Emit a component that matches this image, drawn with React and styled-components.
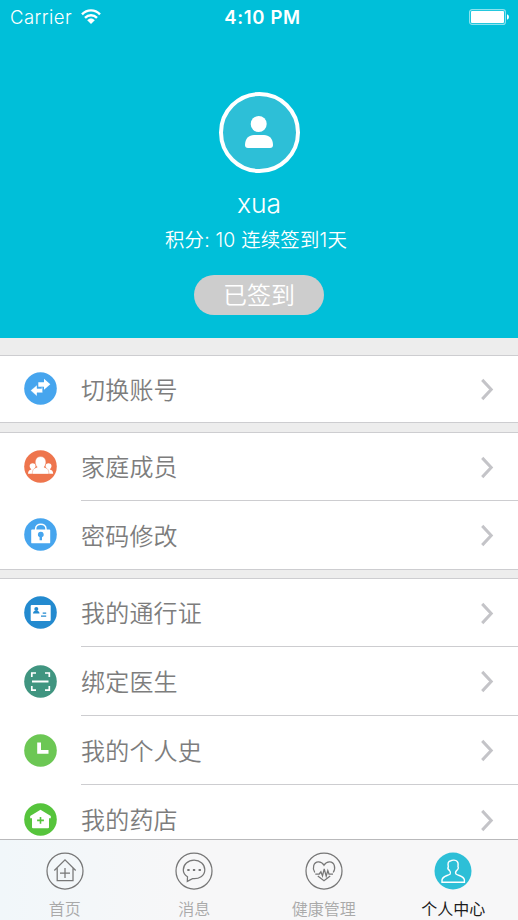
import React from "react";
import styled, { createGlobalStyle } from "styled-components";

const COLORS = {
  primary: "#00bfd9",
  avatar: "#2dbfd7",
  page: "#ededed",
  line: "#cdcdd0",
  text: "#7d7d7d",
  muted: "#a9a9a9",
};

const GlobalStyle = createGlobalStyle`
  * {
    box-sizing: border-box;
  }

  body {
    margin: 0;
    overflow: hidden;
    background: ${COLORS.page};
    font-family: Inter, "Noto Sans CJK SC", sans-serif;
  }
`;

const Screen = styled.div`
  display: flex;
  flex-direction: column;
  width: 518px;
  height: 920px;
  overflow: hidden;
`;

const Hero = styled.header`
  display: flex;
  flex: none;
  flex-direction: column;
  align-items: center;
  height: 338px;
  color: white;
  background: ${COLORS.primary};
`;

const StatusBar = styled.div`
  display: grid;
  grid-template-columns: 1fr auto 1fr;
  align-items: center;
  width: 100%;
  height: 34px;
  padding: 0 9px 0 10px;
`;

const Carrier = styled.div`
  display: flex;
  align-items: center;
  gap: 9px;
  font-size: 18.5px;
  font-weight: 300;
  letter-spacing: 0.45px;
`;

const Time = styled.div`
  padding-left: 6px;
  font-size: 18.5px;
  font-weight: 600;
  letter-spacing: 0.65px;
`;

const BatteryIcon = styled.svg`
  justify-self: end;
`;

const Avatar = styled.div`
  display: grid;
  place-items: center;
  width: 81px;
  height: 81px;
  margin-top: 58px;
  padding-bottom: 1px;
  border: 4px solid white;
  border-radius: 50%;
  background: ${COLORS.avatar};
`;

const Name = styled.div`
  margin-top: 14px;
  font-size: 26.5px;
  font-weight: 350;
  line-height: 32px;
`;

const Points = styled.div`
  margin-top: 7px;
  padding-right: 6px;
  font-size: 19.4px;
  font-weight: 350;
  line-height: 28px;
  letter-spacing: 0.2px;
  white-space: nowrap;
`;

const CheckIn = styled.button`
  width: 130px;
  height: 40px;
  margin-top: 21px;
  padding: 1px 0 0;
  border: 0;
  border-radius: 20px;
  color: white;
  background: #cdcdcd;
  font: 350 24px/39px Inter, "Noto Sans CJK SC", sans-serif;
`;

const Menu = styled.main`
  flex: 1;
  min-height: 0;
  padding-top: 17px;
  overflow: hidden;
`;

const Group = styled.section`
  margin-bottom: ${(props) => props.$gap}px;
  border-top: 1px solid ${COLORS.line};
  border-bottom: 1px solid ${COLORS.line};
  background: white;
`;

const Row = styled.div`
  display: flex;
  align-items: center;
  height: ${(props) => props.$height}px;
  padding-left: 24px;
`;

const RowBody = styled.div`
  display: flex;
  flex: 1;
  align-items: center;
  justify-content: space-between;
  height: 100%;
  margin-left: 24px;
  padding-right: 24px;
  border-bottom: ${(props) => (props.$divided ? `1px solid ${COLORS.line}` : "0")};
`;

const RowLabel = styled.span`
  padding-top: 3px;
  color: ${COLORS.text};
  font-size: 24px;
  font-weight: 350;
  line-height: 36px;
  letter-spacing: 0.2px;
`;

const TabBar = styled.nav`
  display: grid;
  flex: none;
  grid-template-columns: repeat(4, 1fr);
  height: 81px;
  border-top: 1px solid #b9b9bb;
  background: linear-gradient(90deg, #f1f7fa, #f7f7f8 35%);
`;

const Tab = styled.div`
  display: flex;
  flex-direction: column;
  align-items: center;
  padding-top: 12px;
  color: ${(props) => (props.$active ? "#1c1c1c" : COLORS.muted)};
  font-size: 16px;
  font-weight: ${(props) => (props.$active ? 400 : 350)};
  line-height: 24px;
`;

const TabIcon = styled.svg`
  flex: none;
  width: 38px;
  height: 38px;
  margin-bottom: 7px;
  fill: none;
  stroke: #777;
  stroke-width: 1.25;
`;

const BadgeIcon = styled.svg`
  flex: none;
  width: 33px;
  height: 33px;
  margin-bottom: 1px;
  fill: white;
`;

const Badge = ({ color, children }) => (
  <BadgeIcon viewBox="0 0 33 33">
    <circle cx="16.5" cy="16.5" r="16.3" fill={color} />
    {children}
  </BadgeIcon>
);

const SwitchIcon = () => (
  <Badge color="#46a5ee">
    <path d="M14.3 10.2H20V6.8L26.3 12.3L20 17.8V14.8H14.3Z" />
    <path
      d="M18.6 15.2V20.8H13V24.3L6.6 18.4L13 13V16.5H17.5V15.2Z"
      stroke="#46a5ee"
      strokeWidth="0.4"
    />
  </Badge>
);

const FamilyIcon = () => (
  <Badge color="#ee754d">
    <path d="M4 23.8C4.2 20.8 5.2 20 7.4 19.4C4.4 16.7 5.6 13.3 8.7 13.3C11.8 13.3 12.6 16.6 10.4 19.1L12 20.5V23.8Z" />
    <path d="M29.2 23.8C29 20.8 28 20 25.8 19.4C28.8 16.7 27.6 13.3 24.5 13.3C21.4 13.3 20.6 16.6 22.8 19.1L21.2 20.5V23.8Z" />
    <path
      d="M8.3 24.1C8.4 19.5 9.6 18.3 13.2 17.2C9.6 13 11.3 6.6 16.6 6.6C21.9 6.6 23.6 13 20 17.2C23.6 18.3 24.8 19.5 24.9 24.1Z"
      stroke="#ee754d"
      strokeWidth="0.4"
    />
  </Badge>
);

const LockIcon = () => (
  <Badge color="#46a5ee">
    <path
      d="M11.6 12.5V11C11.6 4.5 22 4.5 22 11V12.5"
      fill="none"
      stroke="white"
      strokeWidth="1.5"
    />
    <rect x="7.2" y="11.5" width="19" height="13.8" rx="0.9" />
    <path
      d="M16.8 13.8A2.8 2.8 0 0 1 18 19.2V22.2H15.6V19.2A2.8 2.8 0 0 1 16.8 13.8Z"
      fill="#46a5ee"
    />
  </Badge>
);

const PassIcon = () => (
  <Badge color="#238acf">
    <rect x="6.7" y="9" width="20" height="16" rx="1" />
    <circle cx="12.3" cy="13" r="2" fill="#238acf" />
    <path d="M9 17.4C9.1 15.7 10.3 15 11.2 14.8H13.4C14.8 15.2 15.4 16 15.5 17.4Z" fill="#238acf" />
    <path
      d="M18.7 17.2H22.2M17 20.2H22.2"
      stroke="#238acf"
      strokeWidth="1.2"
    />
  </Badge>
);

const ScanIcon = () => (
  <Badge color="#409580">
    <path
      d="M7.8 12V8H12M21 8H25.3V12M7.8 21V25.2H12M21 25.2H25.3V21"
      fill="none"
      stroke="white"
      strokeWidth="1.7"
    />
    <path d="M8 16.5H24.5" stroke="white" strokeWidth="2" />
  </Badge>
);

const HistoryIcon = () => (
  <Badge color="#6cc754">
    <path d="M13.2 8.5H17V16H24.5V19.8H13.2Z" />
  </Badge>
);

const PharmacyIcon = () => (
  <Badge color="#56c43c">
    <path d="M16.5 6.8L26.8 13V15.3H25V24.2Q25 25.2 24 25.2H9Q8 25.2 8 24.2V15.3H6.2V13Z" />
    <path d="M16.5 14V20.8M13.1 17.4H19.9" stroke="#56c43c" strokeWidth="1.6" />
  </Badge>
);

const Chevron = () => (
  <svg width="14" height="24" viewBox="0 0 14 24" fill="none">
    <path d="M2.2 2.9L11.2 12.5L2.2 22.1" stroke="#c4c4c8" strokeWidth="3" />
  </svg>
);

const HomeTabIcon = () => (
  <TabIcon viewBox="0 0 38 38">
    <circle cx="19" cy="19" r="18" />
    <path d="M8.3 18.5L19 7.8L29.7 18.5M11.2 16V28.7H27V16M19 16V26M14 21H24" />
  </TabIcon>
);

const MessageTabIcon = () => (
  <TabIcon viewBox="0 0 38 38">
    <circle cx="19" cy="19" r="18" />
    <path d="M12.5 24.8C9.9 23.1 8.3 20.8 8.3 18C8.3 12.5 13 8.2 19.1 8.2C25.2 8.2 29.8 12.5 29.8 17.7C29.8 23.8 24 27.3 17.5 26.6L12.3 29.4Z" />
    <path d="M12.3 18H14.6M17.9 18H20.2M23.6 18H25.9" strokeWidth="2.2" />
  </TabIcon>
);

const HealthTabIcon = () => (
  <TabIcon viewBox="0 0 38 38">
    <circle cx="19" cy="19" r="18" />
    <path d="M9.8 20.5C6.8 15.8 8.8 10 13.3 9.8C16 9.7 17.8 11.2 19 13.2C20.2 11.2 22 9.7 24.7 9.8C29.2 10 31.3 15.8 28.2 20.5M12.8 24L19 28.8L25.2 24" />
    <path d="M10.3 22H14.2L15.9 19.8L17.5 24L19.2 16.8L21.2 24.2L22.8 18.5L24 22H28" />
  </TabIcon>
);

const ProfileTabIcon = () => (
  <TabIcon viewBox="0 0 38 38">
    <circle cx="19" cy="19" r="18.5" fill={COLORS.avatar} stroke="none" />
    <path
      stroke="white"
      strokeWidth="1.4"
      d="M16.2 22C17 20.8 16.5 19.7 15.4 18.4C14 17.3 13.7 15.6 14.3 14.8C13.6 11.2 14.1 9 17 8.7C18.3 7.8 21.7 8 23 9.3C24.8 10.3 24 13 24 14.7C24.7 15.7 24 17.6 22.8 18.3C21.5 19.8 21.1 20.9 22 22C24.7 24 29.4 23.6 30.4 27.8V30.2H8V27.8C9 23.6 13.7 24 16.2 22Z"
    />
  </TabIcon>
);

const GROUPS = [
  { gap: 9, rows: [{ label: "切换账号", icon: SwitchIcon, height: 66 }] },
  {
    gap: 8,
    rows: [
      { label: "家庭成员", icon: FamilyIcon, height: 68 },
      { label: "密码修改", icon: LockIcon, height: 68 },
    ],
  },
  {
    gap: 0,
    rows: [
      { label: "我的通行证", icon: PassIcon, height: 68 },
      { label: "绑定医生", icon: ScanIcon, height: 69 },
      { label: "我的个人史", icon: HistoryIcon, height: 69 },
      { label: "我的药店", icon: PharmacyIcon, height: 69 },
    ],
  },
];

const TABS = [
  { label: "首页", icon: HomeTabIcon },
  { label: "消息", icon: MessageTabIcon },
  { label: "健康管理", icon: HealthTabIcon },
  { label: "个人中心", icon: ProfileTabIcon, active: true },
];

const App = () => (
  <>
    <GlobalStyle />
    <Screen>
      <Hero>
        <StatusBar>
          <Carrier>
            Carrier
            <svg width="20" height="17" viewBox="0 0 20 17" fill="none" stroke="white" strokeWidth="2.4">
              <path d="M1 5.3C6 .1 14 .1 19 5.3M4 8.8C7.4 5.3 12.6 5.3 16 8.8" />
              <path d="M6.2 11.2C8.5 9 11.5 9 13.8 11.2L10 15Z" fill="white" stroke="none" />
            </svg>
          </Carrier>
          <Time>4:10 PM</Time>
          <BatteryIcon width="40" height="16" viewBox="0 0 40 16">
            <rect x="0.6" y="0.6" width="35.8" height="14.8" rx="2.5" fill="none" stroke="#8ce2ee" strokeWidth="1.2" />
            <rect x="2" y="2" width="33" height="12" rx="1" fill="white" />
            <path d="M38 5.2Q40 6 40 8Q40 10 38 10.8Z" fill="white" />
          </BatteryIcon>
        </StatusBar>
        <Avatar>
          <svg width="28" height="32" viewBox="0 0 28 32" fill="white">
            <circle cx="13.7" cy="8" r="8" />
            <path d="M0 29C0 22.5 4 19 9 19H19C24 19 28 22.5 28 29Q28 32 25 32H3Q0 32 0 29Z" />
          </svg>
        </Avatar>
        <Name>xua</Name>
        <Points>积分: 10 连续签到1天</Points>
        <CheckIn>已签到</CheckIn>
      </Hero>
      <Menu>
        {GROUPS.map(({ gap, rows }) => (
          <Group key={rows[0].label} $gap={gap}>
            {rows.map(({ label, icon: Icon, height }, index) => (
              <Row key={label} $height={height}>
                <Icon />
                <RowBody $divided={index < rows.length - 1}>
                  <RowLabel>{label}</RowLabel>
                  <Chevron />
                </RowBody>
              </Row>
            ))}
          </Group>
        ))}
      </Menu>
      <TabBar>
        {TABS.map(({ label, icon: Icon, active }) => (
          <Tab key={label} $active={active}>
            <Icon />
            {label}
          </Tab>
        ))}
      </TabBar>
    </Screen>
  </>
);

export default App;
